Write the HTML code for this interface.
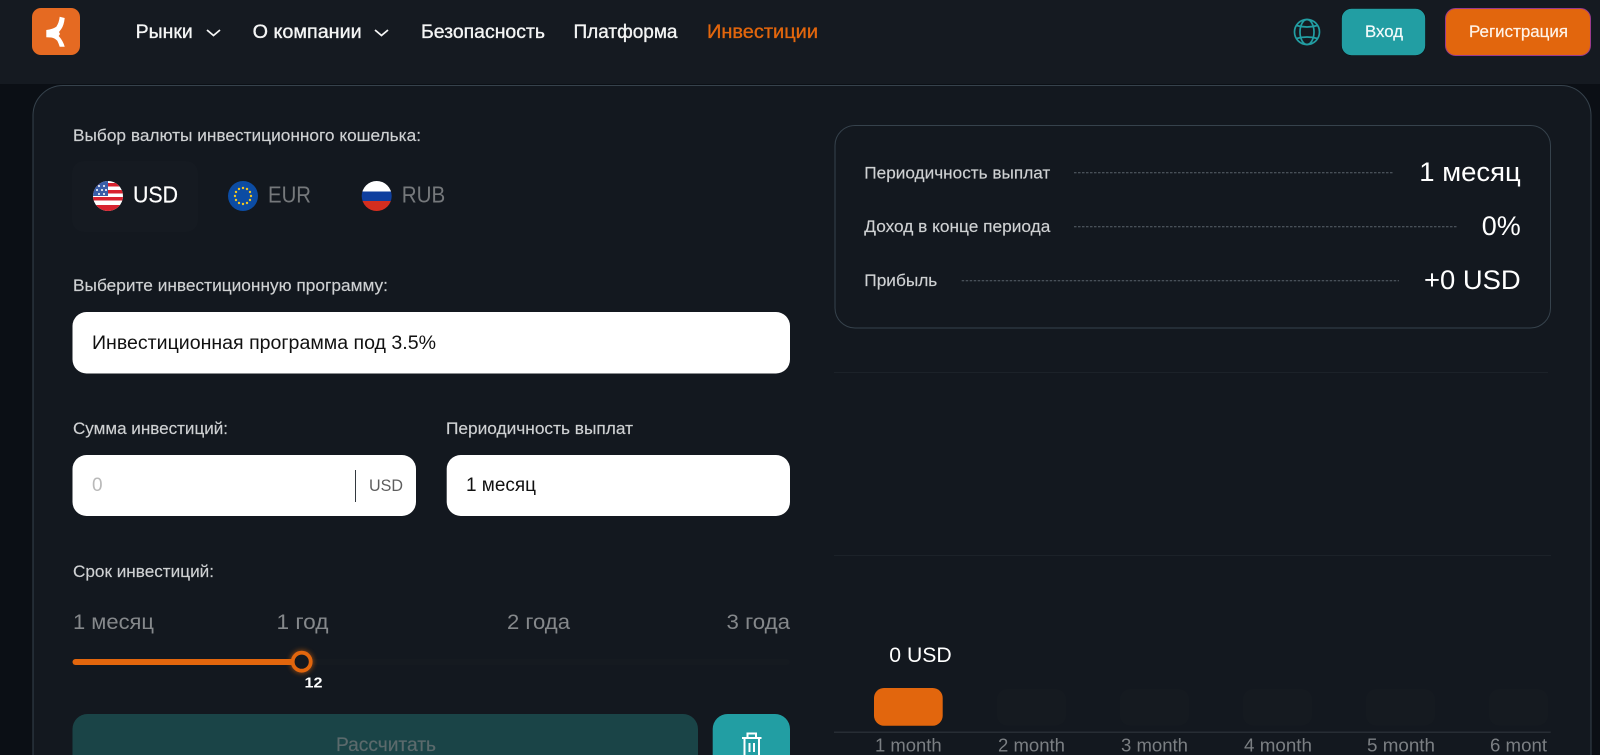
<!DOCTYPE html>
<html lang="ru">
<head>
<meta charset="utf-8">
<title>Инвестиции</title>
<style>
html,body{margin:0;padding:0;width:1600px;height:755px;overflow:hidden;background:#0b0f15}
svg{display:block}
text{font-family:"Liberation Sans","Noto Sans CJK SC",sans-serif;white-space:pre}
.nav{font-size:19px;fill:#f4f5f5;stroke:#f4f5f5;stroke-width:.35}
.lab{font-size:17px;fill:#cfd1d3;stroke:#cfd1d3;stroke-width:.15}
.big{font-size:27px;fill:#fff}
.cur{font-size:23px;fill:#75787b}
.sc{font-size:21px;fill:#85888b}
.mo{font-size:18px;fill:#7b7f83}
.blk{font-size:19px;fill:#111}
</style>
</head>
<body>
<svg width="1600" height="755" viewBox="0 0 1600 755" xmlns="http://www.w3.org/2000/svg">
<defs>
<clipPath id="cu"><circle cx="108" cy="196" r="15"/></clipPath>
<clipPath id="cr"><circle cx="376.700" cy="196" r="15"/></clipPath>
<filter id="gl" x="-50%" y="-50%" width="200%" height="200%"><feGaussianBlur stdDeviation="2.500"/></filter>
</defs>
<rect width="1600" height="755" fill="#0b0f15"/>
<rect width="1600" height="84" fill="#151a21"/>

<!-- logo -->
<rect x="32" y="8" width="48" height="47" rx="9" fill="#e56a22"/>
<path d="M46.300 30 Q53 29 56.300 26.700 Q59 23 59.700 16.800 L64.700 18 Q64 25 61.300 29 L59 32 L60 34 L58.700 36 Q63 40.700 64.700 46.700 L59.700 46.700 Q58.500 43 57.300 40.700 Q54.500 38 51.300 37.500 L46.300 37.300 Z" fill="#fff"/>

<!-- nav -->
<text class="nav" x="135.700" y="38" textLength="57" lengthAdjust="spacingAndGlyphs">Рынки</text>
<path d="M207 30 L213.500 35.500 L220 30" fill="none" stroke="#f4f5f5" stroke-width="1.800"/>
<text class="nav" x="252.700" y="38" textLength="109" lengthAdjust="spacingAndGlyphs">О компании</text>
<path d="M375 30 L381.500 35.500 L388 30" fill="none" stroke="#f4f5f5" stroke-width="1.800"/>
<text class="nav" x="421" y="38" textLength="124" lengthAdjust="spacingAndGlyphs">Безопасность</text>
<text class="nav" x="573.500" y="38" textLength="104" lengthAdjust="spacingAndGlyphs">Платформа</text>
<text class="nav" x="707" y="38" textLength="111" lengthAdjust="spacingAndGlyphs" style="fill:#e2660d;stroke:#e2660d">Инвестиции</text>

<!-- globe -->
<g fill="none" stroke="#229ea3" stroke-width="1.700">
<circle cx="1307" cy="32" r="12.500"/>
<ellipse cx="1307" cy="32" rx="7" ry="12.500"/>
<path d="M1296.500 25.500 Q1307 28.500 1317.500 25.500 M1296.500 38.500 Q1307 35.500 1317.500 38.500"/>
</g>

<!-- header buttons -->
<rect x="1341.500" y="8.500" width="84" height="47" rx="10" fill="#229ea3" stroke="#0c1014" stroke-width=".6"/>
<text x="1365" y="37" font-size="17" fill="#f3fbfb" stroke="#f3fbfb" stroke-width=".2" textLength="38" lengthAdjust="spacingAndGlyphs">Вход</text>
<rect x="1445.500" y="8.500" width="145" height="47" rx="10" fill="#e2660d" stroke="#9a3a8e" stroke-width="1"/>
<text x="1469" y="37" font-size="17" fill="#fff3e8" stroke="#fff3e8" stroke-width=".2" textLength="99" lengthAdjust="spacingAndGlyphs">Регистрация</text>

<!-- card -->
<path d="M33 760 V115 A30 30 0 0 1 63 85.500 H1561 A30 30 0 0 1 1591 115 V760Z" fill="#13181f" stroke="#36424c" stroke-width="1"/>

<!-- currency -->
<text class="lab" x="73" y="141" textLength="348" lengthAdjust="spacingAndGlyphs">Выбор валюты инвестиционного кошелька:</text>
<rect x="72" y="161" width="126" height="71" rx="12" fill="#151a21"/>

<g clip-path="url(#cu)">
<rect x="93" y="181" width="30" height="30" fill="#fff"/>
<rect x="93" y="183" width="30" height="3.500" fill="#d8232f"/>
<rect x="93" y="190" width="30" height="3.500" fill="#d8232f"/>
<rect x="93" y="197" width="30" height="3.500" fill="#d8232f"/>
<rect x="93" y="205" width="30" height="6" fill="#d8232f"/>
<rect x="93" y="181" width="15" height="15" fill="#3a5ea8"/>
<g fill="#fff"><circle cx="99" cy="186" r="1"/><circle cx="104" cy="186" r="1"/><circle cx="97" cy="190" r="1"/><circle cx="102" cy="190" r="1"/><circle cx="106" cy="190" r="1"/><circle cx="99" cy="194" r="1"/><circle cx="104" cy="194" r="1"/></g>
</g>
<text x="133" y="202.700" font-size="23" fill="#fff" stroke="#fff" stroke-width=".2" textLength="45" lengthAdjust="spacingAndGlyphs">USD</text>

<circle cx="243" cy="196" r="15" fill="#0c4ca3"/>
<g fill="#f2c522"><circle cx="243" cy="188" r="1.200"/><circle cx="247" cy="189" r="1.200"/><circle cx="250" cy="192" r="1.200"/><circle cx="251" cy="196" r="1.200"/><circle cx="250" cy="200" r="1.200"/><circle cx="247" cy="203" r="1.200"/><circle cx="243" cy="204" r="1.200"/><circle cx="239" cy="203" r="1.200"/><circle cx="236" cy="200" r="1.200"/><circle cx="235" cy="196" r="1.200"/><circle cx="236" cy="192" r="1.200"/><circle cx="239" cy="189" r="1.200"/></g>
<text class="cur" x="268" y="202.700" textLength="43" lengthAdjust="spacingAndGlyphs">EUR</text>

<g clip-path="url(#cr)">
<rect x="361" y="181" width="31" height="10.500" fill="#fff"/>
<rect x="361" y="191.500" width="31" height="9.500" fill="#0f3f9e"/>
<rect x="361" y="201" width="31" height="10" fill="#d42e1f"/>
</g>
<text class="cur" x="401.700" y="202.700" textLength="43.500" lengthAdjust="spacingAndGlyphs">RUB</text>

<!-- program -->
<text class="lab" x="73" y="291" textLength="315" lengthAdjust="spacingAndGlyphs">Выберите инвестиционную программу:</text>
<rect x="72.500" y="312" width="717.500" height="61.500" rx="14" fill="#fff"/>
<text class="blk" x="92" y="349" textLength="344" lengthAdjust="spacingAndGlyphs">Инвестиционная программа под 3.5%</text>

<!-- amount / period -->
<text class="lab" x="73" y="434" textLength="155" lengthAdjust="spacingAndGlyphs">Сумма инвестиций:</text>
<text class="lab" x="446" y="434" textLength="187" lengthAdjust="spacingAndGlyphs">Периодичность выплат</text>
<rect x="72.500" y="455" width="343.500" height="61" rx="14" fill="#fff"/>
<text x="92" y="491" font-size="19" fill="#b9b9b9">0</text>
<rect x="355" y="470" width="1" height="32" fill="#33393f"/>
<text x="369" y="491" font-size="17" fill="#5e5e5e" textLength="34" lengthAdjust="spacingAndGlyphs">USD</text>
<rect x="446.700" y="455" width="343.300" height="61" rx="14" fill="#fff"/>
<text class="blk" x="466" y="491" textLength="70" lengthAdjust="spacingAndGlyphs">1 месяц</text>

<!-- term -->
<text class="lab" x="73" y="577" textLength="141" lengthAdjust="spacingAndGlyphs">Срок инвестиций:</text>
<text class="sc" x="73" y="629" textLength="81" lengthAdjust="spacingAndGlyphs">1 месяц</text>
<text class="sc" x="276.500" y="629" textLength="52" lengthAdjust="spacingAndGlyphs">1 год</text>
<text class="sc" x="507" y="629" textLength="63" lengthAdjust="spacingAndGlyphs">2 года</text>
<text class="sc" x="726.500" y="629" textLength="63.500" lengthAdjust="spacingAndGlyphs">3 года</text>

<rect x="72.500" y="659" width="717.500" height="6" rx="3" fill="#151a20"/>
<rect x="72.500" y="659" width="229" height="6" rx="3" fill="#e2660d"/>
<circle cx="301.700" cy="661.700" r="12" fill="#e2660d" opacity=".5" filter="url(#gl)"/>
<circle cx="301.700" cy="661.700" r="9" fill="#13181f" stroke="#e2660d" stroke-width="3.800"/>
<text x="304.500" y="687.500" font-size="15" font-weight="700" fill="#fff" textLength="18" lengthAdjust="spacingAndGlyphs">12</text>

<!-- actions -->
<rect x="72.500" y="714" width="625.500" height="70" rx="15" fill="#1a4447"/>
<text x="336" y="751" font-size="19" fill="#5b6a6c" stroke="#5b6a6c" stroke-width=".2" textLength="100" lengthAdjust="spacingAndGlyphs">Рассчитать</text>
<rect x="712.700" y="714" width="77.300" height="70" rx="15" fill="#229ea3"/>
<g fill="none" stroke="#fff" stroke-width="2">
<path d="M742 738 H761.500"/>
<path d="M747.500 738 V733.500 H756 V738"/>
<path d="M744.500 738 V757 H759 V738"/>
<path d="M749.500 743 V752 M754 743 V752"/>
</g>

<!-- summary -->
<rect x="835" y="125.500" width="715.500" height="202.500" rx="20" fill="#13181f" stroke="#36424c" stroke-width="1"/>
<text class="lab" x="864.300" y="178.500" textLength="186" lengthAdjust="spacingAndGlyphs">Периодичность выплат</text>
<text class="lab" x="864.300" y="232" textLength="186" lengthAdjust="spacingAndGlyphs">Доход в конце периода</text>
<text class="lab" x="864.300" y="286" textLength="73" lengthAdjust="spacingAndGlyphs">Прибыль</text>
<g stroke="#5a636b" stroke-width="1" stroke-dasharray="2.500 1.500">
<path d="M1074 172.700 H1393.300"/>
<path d="M1074 226.700 H1456.700"/>
<path d="M961.700 280.700 H1399"/>
</g>
<text class="big" x="1419.300" y="181" textLength="101.400" lengthAdjust="spacingAndGlyphs">1 месяц</text>
<text class="big" x="1481.700" y="235" textLength="39" lengthAdjust="spacingAndGlyphs">0%</text>
<text class="big" x="1424" y="289" textLength="96.700" lengthAdjust="spacingAndGlyphs">+0 USD</text>

<!-- chart -->
<rect x="834" y="372" width="714" height="1" fill="#1c2229"/>
<rect x="834" y="555" width="717" height="1" fill="#1c2229"/>
<text x="889.300" y="662" font-size="21" fill="#fff" textLength="62.400" lengthAdjust="spacingAndGlyphs">0 USD</text>
<rect x="874" y="688" width="68.700" height="37.700" rx="10" fill="#e2660d"/>
<g fill="#151a20">
<rect x="997" y="689" width="69" height="36.500" rx="10"/>
<rect x="1120" y="689" width="69" height="36.500" rx="10"/>
<rect x="1243" y="689" width="69" height="36.500" rx="10"/>
<rect x="1366" y="689" width="69" height="36.500" rx="10"/>
<rect x="1489" y="689" width="59" height="36.500" rx="10"/>
</g>
<rect x="834" y="731.500" width="716.700" height="1.500" fill="#272d34"/>
<text class="mo" x="875" y="751.700" textLength="66.700" lengthAdjust="spacingAndGlyphs">1 month</text>
<text class="mo" x="998" y="751.700" textLength="67" lengthAdjust="spacingAndGlyphs">2 month</text>
<text class="mo" x="1121" y="751.700" textLength="67" lengthAdjust="spacingAndGlyphs">3 month</text>
<text class="mo" x="1244" y="751.700" textLength="68" lengthAdjust="spacingAndGlyphs">4 month</text>
<text class="mo" x="1367" y="751.700" textLength="68" lengthAdjust="spacingAndGlyphs">5 month</text>
<text class="mo" x="1490" y="751.700" textLength="57" lengthAdjust="spacingAndGlyphs">6 mont</text>
</svg>
</body>
</html>
